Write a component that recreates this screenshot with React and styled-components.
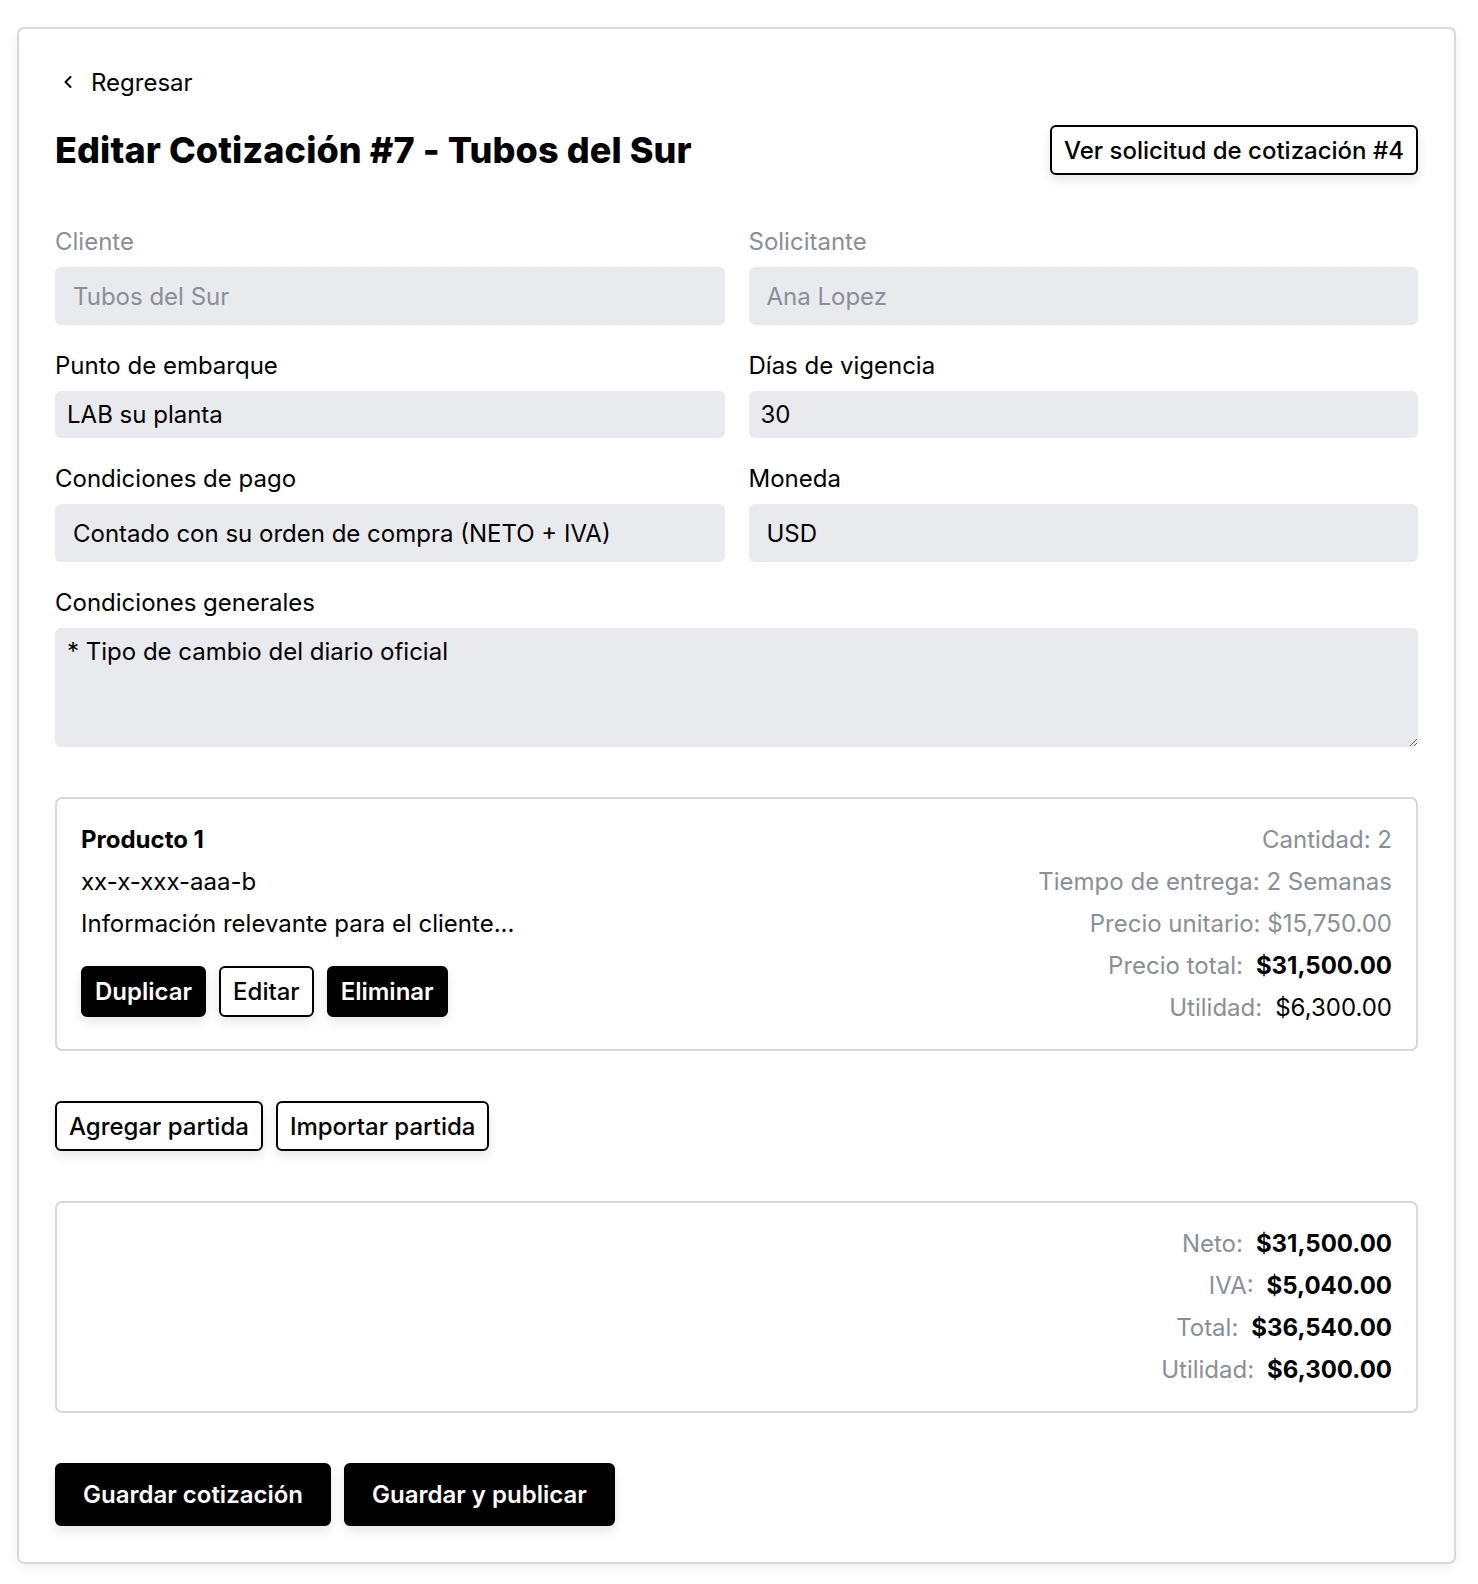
import React from 'react';
import styled, { createGlobalStyle } from 'styled-components';
import { ChevronLeft } from 'lucide-react';

const GlobalStyle = createGlobalStyle`
  * { box-sizing: border-box; }
  body {
    margin: 0;
    background: #fff;
    color: #000;
    font-family: Inter, "Noto Sans", "Liberation Sans", sans-serif;
  }
`;

const Page = styled.div`
  padding: 27px 22px 19px 17px;
`;

const Card = styled.div`
  border: 2px solid #d5d8dd;
  border-radius: 7px;
  box-shadow: 0 4px 14px rgba(0, 0, 0, 0.06);
  padding: 37px 36px 36px 36px;
`;

const BackLink = styled.a`
  display: flex;
  align-items: center;
  gap: 13px;
  padding-left: 3px;
  height: 32px;
  font-size: 24px;
  color: #000;
  text-decoration: none;
  cursor: pointer;
`;

const Header = styled.div`
  display: flex;
  justify-content: space-between;
  align-items: center;
  margin-top: 27px;
`;

const Title = styled.h1`
  margin: 0;
  font-size: 36px;
  line-height: 44px;
  font-weight: 800;
  letter-spacing: 0.1px;
`;

const Button = styled.button`
  font-family: inherit;
  font-size: 24px;
  font-weight: ${(p) => (p.$dark ? 600 : 500)};
  height: ${(p) => p.$h || 50}px;
  padding: 0 ${(p) => p.$px || 12}px;
  border-radius: 6px;
  border: 2px solid #000;
  background: ${(p) => (p.$dark ? '#000' : '#fff')};
  color: ${(p) => (p.$dark ? '#fff' : '#000')};
  box-shadow: 0 5px 12px rgba(0, 0, 0, 0.1);
  cursor: pointer;
  white-space: nowrap;
`;

const FormGrid = styled.div`
  display: grid;
  grid-template-columns: 1fr 1fr;
  column-gap: 24px;
  row-gap: 25px;
  margin-top: 51px;
`;

const Field = styled.div`
  display: flex;
  flex-direction: column;
  grid-column: ${(p) => (p.$full ? '1 / -1' : 'auto')};
`;

const Label = styled.label`
  font-size: 24px;
  line-height: 32px;
  margin-bottom: 9px;
  color: ${(p) => (p.$muted ? '#898f98' : '#000')};
`;

const Input = styled.input`
  display: block;
  width: 100%;
  height: ${(p) => p.$h}px;
  padding: 0 ${(p) => p.$px}px;
  border: none;
  border-radius: 6px;
  background: #e9eaee;
  font-family: inherit;
  font-size: 24px;
  color: #000;
  outline: none;

  &:disabled {
    color: #898f98;
    -webkit-text-fill-color: #898f98;
    opacity: 1;
  }
`;

const Select = styled.select`
  display: block;
  width: 100%;
  height: 58px;
  padding: 0 18px;
  border: none;
  border-radius: 6px;
  background: #e9eaee;
  font-family: inherit;
  font-size: 24px;
  color: #000;
  appearance: none;
  -webkit-appearance: none;
  outline: none;
`;

const TextArea = styled.textarea`
  display: block;
  width: 100%;
  height: 119px;
  padding: 9px 12px;
  border: none;
  border-radius: 6px;
  background: #e9eaee;
  font-family: inherit;
  font-size: 24px;
  line-height: 30px;
  color: #000;
  resize: vertical;
  outline: none;
`;

const Panel = styled.div`
  display: flex;
  justify-content: space-between;
  margin-top: 50px;
  border: 2px solid #d5d8dd;
  border-radius: 7px;
  padding: 20px 24px;
`;

const Column = styled.div`
  display: flex;
  flex-direction: column;
  align-items: ${(p) => (p.$right ? 'flex-end' : 'flex-start')};
  margin-left: ${(p) => (p.$right ? 'auto' : '0')};
`;

const Line = styled.div`
  font-size: 24px;
  line-height: 42px;
  font-weight: ${(p) => (p.$bold ? 700 : 400)};
  color: ${(p) => (p.$muted ? '#898f98' : '#000')};
  white-space: nowrap;
`;

const Value = styled.span`
  margin-left: 13px;
  color: #000;
  font-weight: ${(p) => (p.$bold ? 700 : 400)};
`;

const ButtonRow = styled.div`
  display: flex;
  gap: 13px;
  margin-top: ${(p) => p.$mt || 0}px;
`;

const products = [
  {
    name: 'Producto 1',
    code: 'xx-x-xxx-aaa-b',
    info: 'Información relevante para el cliente...',
    qty: 2,
    lead: '2 Semanas',
    unit: '$15,750.00',
    total: '$31,500.00',
    profit: '$6,300.00',
  },
];

const totals = [
  ['Neto:', '$31,500.00'],
  ['IVA:', '$5,040.00'],
  ['Total:', '$36,540.00'],
  ['Utilidad:', '$6,300.00'],
];

export default function App() {
  return (
    <Page>
      <GlobalStyle />
      <Card>
        <BackLink>
          <ChevronLeft size={20} strokeWidth={2.4} />
          Regresar
        </BackLink>

        <Header>
          <Title>Editar Cotización #7 - Tubos del Sur</Title>
          <Button>Ver solicitud de cotización #4</Button>
        </Header>

        <FormGrid>
          <Field>
            <Label $muted>Cliente</Label>
            <Input $h={58} $px={18} value="Tubos del Sur" disabled readOnly />
          </Field>
          <Field>
            <Label $muted>Solicitante</Label>
            <Input $h={58} $px={18} value="Ana Lopez" disabled readOnly />
          </Field>
          <Field>
            <Label>Punto de embarque</Label>
            <Input $h={47} $px={12} defaultValue="LAB su planta" />
          </Field>
          <Field>
            <Label>Días de vigencia</Label>
            <Input $h={47} $px={12} defaultValue="30" />
          </Field>
          <Field>
            <Label>Condiciones de pago</Label>
            <Select defaultValue="contado">
              <option value="contado">Contado con su orden de compra (NETO + IVA)</option>
            </Select>
          </Field>
          <Field>
            <Label>Moneda</Label>
            <Select defaultValue="USD">
              <option value="USD">USD</option>
            </Select>
          </Field>
          <Field $full>
            <Label>Condiciones generales</Label>
            <TextArea defaultValue="* Tipo de cambio del diario oficial" />
          </Field>
        </FormGrid>

        {products.map((p) => (
          <Panel key={p.name}>
            <Column>
              <Line $bold>{p.name}</Line>
              <Line>{p.code}</Line>
              <Line>{p.info}</Line>
              <ButtonRow $mt={21}>
                <Button $dark $h={51}>Duplicar</Button>
                <Button $h={51}>Editar</Button>
                <Button $dark $h={51}>Eliminar</Button>
              </ButtonRow>
            </Column>
            <Column $right>
              <Line $muted>Cantidad: {p.qty}</Line>
              <Line $muted>Tiempo de entrega: {p.lead}</Line>
              <Line $muted>Precio unitario: {p.unit}</Line>
              <Line $muted>
                Precio total:<Value $bold>{p.total}</Value>
              </Line>
              <Line $muted>
                Utilidad:<Value>{p.profit}</Value>
              </Line>
            </Column>
          </Panel>
        ))}

        <ButtonRow $mt={50}>
          <Button>Agregar partida</Button>
          <Button>Importar partida</Button>
        </ButtonRow>

        <Panel>
          <Column $right>
            {totals.map(([label, value]) => (
              <Line $muted key={label}>
                {label}
                <Value $bold>{value}</Value>
              </Line>
            ))}
          </Column>
        </Panel>

        <ButtonRow $mt={50}>
          <Button $dark $h={63} $px={26}>Guardar cotización</Button>
          <Button $dark $h={63} $px={26}>Guardar y publicar</Button>
        </ButtonRow>
      </Card>
    </Page>
  );
}
